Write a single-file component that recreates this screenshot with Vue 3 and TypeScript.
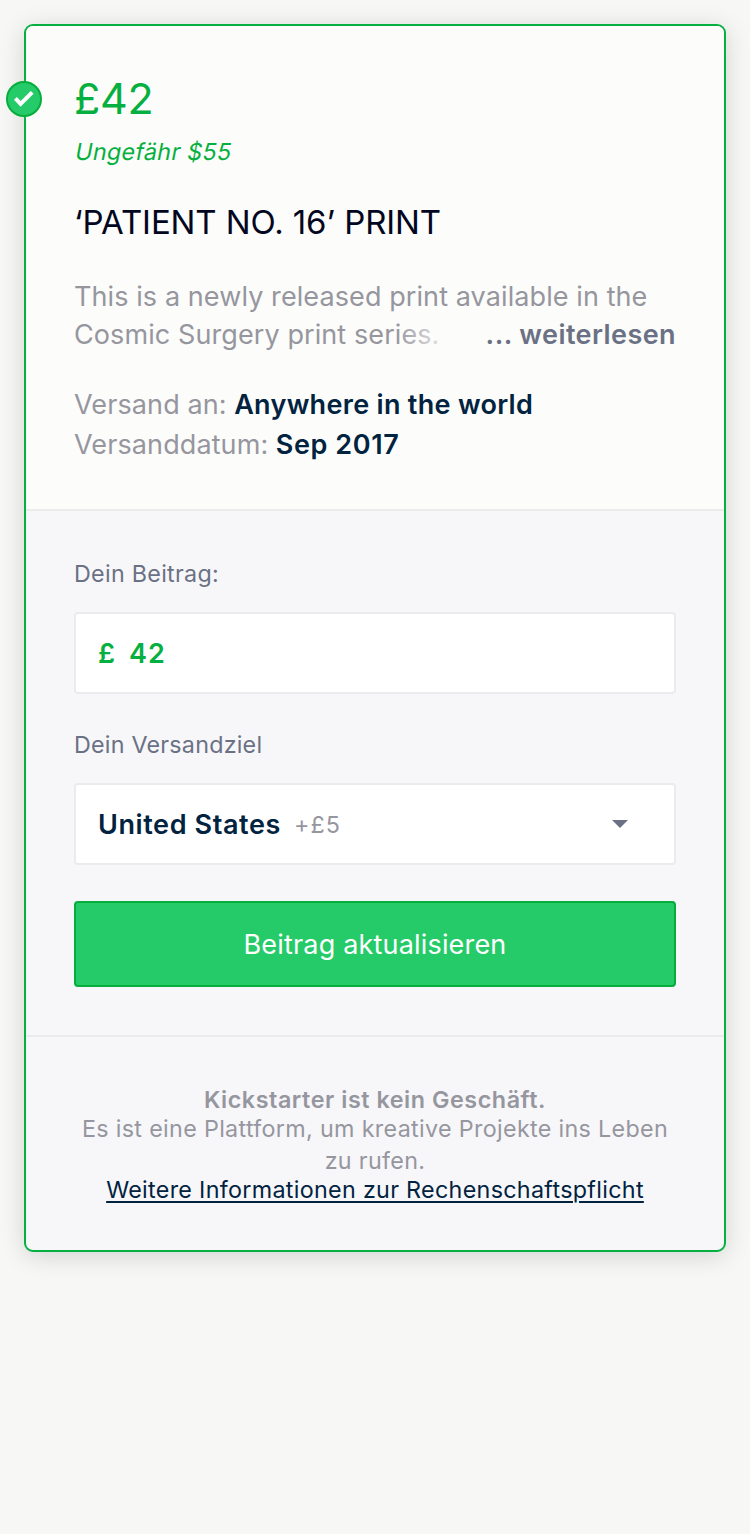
<script setup lang="ts">
import { ref } from 'vue'

interface ShippingInfo {
  label: string
  value: string
  kind: string
}

const pledge = ref<number>(42)
const shipping: ShippingInfo[] = [
  { label: 'Versand an:', value: 'Anywhere in the world', kind: 'place' },
  { label: 'Versanddatum:', value: 'Sep 2017', kind: 'date' },
]
</script>

<template>
  <main class="page">
    <article class="card">
      <span class="badge">
        <svg viewBox="0 0 36 36" width="36" height="36" aria-hidden="true">
          <circle cx="18" cy="18" r="17" fill="#25cb68" stroke="#05ae3c" stroke-width="2" />
          <path d="M9.4 17.3 L14.6 22.8 L26.2 11.3" fill="none" stroke="#fff" stroke-width="4" />
        </svg>
      </span>

      <section class="reward">
        <h2 class="price">£{{ pledge }}</h2>
        <p class="approx"><span>Ungefähr $55</span></p>
        <h3 class="title">‘PATIENT NO. 16’ PRINT</h3>
        <div class="description">
          <p>This is a newly released print available in the</p>
          <p>Cosmic Surgery print series.</p>
          <a class="more">... weiterlesen</a>
        </div>
        <dl class="shipping">
          <div v-for="item in shipping" :key="item.kind" class="row" :class="item.kind">
            <dt>{{ item.label }}</dt>
            <dd>{{ item.value }}</dd>
          </div>
        </dl>
      </section>

      <section class="form">
        <p class="label">Dein Beitrag:</p>
        <div class="field amount">
          <span class="currency">£</span><span>{{ pledge }}</span>
        </div>
        <p class="label target-label">Dein Versandziel</p>
        <div class="field">
          <span class="country">United States</span>
          <span class="surcharge">+£5</span>
          <svg class="caret" viewBox="0 0 16 8" width="16" height="8" aria-hidden="true">
            <path d="M0 0H16L8 8Z" fill="#6b7184" />
          </svg>
        </div>
        <button class="submit" type="button">Beitrag aktualisieren</button>
      </section>

      <footer class="note">
        <strong class="heading">Kickstarter ist kein Geschäft.</strong>
        <p class="text">Es ist eine Plattform, um kreative Projekte ins Leben<br />zu rufen.</p>
        <a class="link">Weitere Informationen zur Rechenschaftspflicht</a>
      </footer>
    </article>
  </main>
</template>

<style>
body {
  margin: 0;
  background: #f7f7f5;
}
</style>

<style scoped>
.page {
  box-sizing: border-box;
  min-height: 1534px;
  padding: 24px;
  background: #f7f7f5;
  font-family: Inter, "Liberation Sans", sans-serif;
  font-size: 27px;
  color: #96969f;
  white-space: nowrap;
}
.card {
  position: relative;
  box-sizing: border-box;
  height: 1228px;
  border: 2px solid #05b040;
  border-radius: 9px;
  background: #f7f7fa;
  box-shadow: 0 4px 24px rgba(0, 0, 0, 0.15);
}
.badge {
  position: absolute;
  left: -20px;
  top: 55px;
  width: 36px;
  height: 36px;
}
.badge svg,
.caret {
  display: block;
}
h2, h3, p, dl, dt, dd {
  margin: 0;
  font-weight: 400;
}
.reward {
  box-sizing: border-box;
  height: 485px;
  padding: 48px 48px 0;
  border-bottom: 2px solid #ebebeb;
  border-radius: 7px 7px 0 0;
  background: #fcfcfa;
}
.price {
  font-size: 43px;
  line-height: 48px;
  letter-spacing: -0.3px;
  color: #05b040;
}
.approx {
  margin-top: 14px;
  font-size: 23.3px;
  line-height: 32px;
  letter-spacing: 0.3px;
  color: #05b040;
}
.approx span {
  display: inline-block;
  transform: skewX(-11deg);
  transform-origin: 0 24px;
}
.title {
  margin-top: 34px;
  font-size: 33px;
  line-height: 40px;
  letter-spacing: -0.1px;
  color: #020621;
}
.description {
  position: relative;
  margin-top: 36px;
  line-height: 38px;
  letter-spacing: 0.09px;
}
.more {
  position: absolute;
  right: 0;
  bottom: 0;
  padding-left: 90px;
  background: linear-gradient(to right, rgba(252, 252, 250, 0), #fcfcfa 60px);
  font-weight: 600;
  letter-spacing: 0.42px;
  color: #6b7184;
}
.shipping {
  margin-top: 31px;
}
.row {
  display: flex;
  gap: 7.5px;
  line-height: 40px;
}
.row dt {
  letter-spacing: 0.1px;
}
.row dd {
  font-weight: 600;
  letter-spacing: 0.3px;
  color: #022340;
}
.date dd {
  letter-spacing: 0.6px;
}
.form {
  box-sizing: border-box;
  height: 526px;
  padding: 47px 48px 0;
  border-bottom: 2px solid #ebebeb;
}
.label {
  font-size: 23.3px;
  line-height: 32px;
  letter-spacing: 0.28px;
  color: #6b7184;
}
.target-label {
  margin-top: 35px;
  letter-spacing: 0.22px;
}
.field {
  box-sizing: border-box;
  display: flex;
  align-items: center;
  height: 82px;
  margin-top: 22px;
  padding: 0 22px;
  border: 2px solid #ebebed;
  border-radius: 4px;
  background: #fff;
  font-weight: 600;
  letter-spacing: 0.6px;
}
.amount {
  letter-spacing: 1px;
  color: #05b040;
}
.currency {
  margin-right: 13px;
}
.country {
  color: #022340;
}
.surcharge {
  margin-left: 13px;
  font-size: 23.3px;
  font-weight: 400;
  letter-spacing: 1.1px;
}
.caret {
  margin-left: auto;
  margin-right: 24px;
}
.submit {
  display: block;
  box-sizing: border-box;
  width: 100%;
  height: 86px;
  margin: 36px 0 0;
  padding: 0;
  border: 2px solid #05ae3c;
  border-radius: 4px;
  background: #25cb68;
  font: inherit;
  letter-spacing: 0.18px;
  color: #fff;
}
.note {
  padding-top: 49px;
  font-size: 23.3px;
  letter-spacing: 0.33px;
  text-align: center;
}
.heading {
  display: block;
  line-height: 27px;
  font-weight: 600;
  letter-spacing: 0.56px;
}
.text {
  line-height: 32px;
}
.link {
  display: block;
  line-height: 25px;
  letter-spacing: 0.31px;
  color: #022340;
  text-decoration: underline;
  text-decoration-thickness: 2px;
  text-underline-offset: 3px;
}
</style>
